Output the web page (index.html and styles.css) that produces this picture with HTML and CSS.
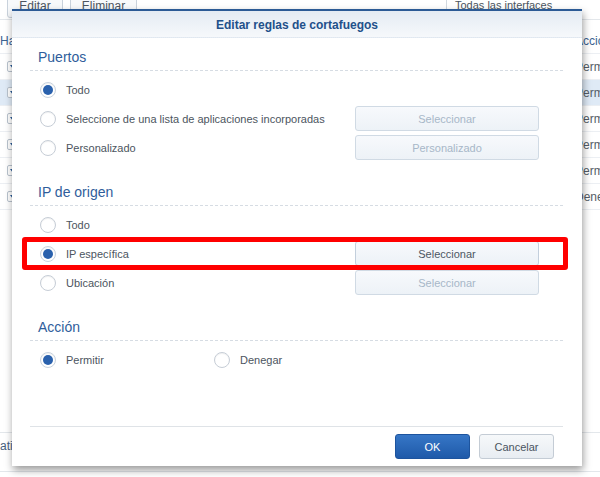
FILE: index.html
```html
<!DOCTYPE html>
<html lang="es">
<head>
  <meta charset="utf-8" />
  <title>Editar reglas de cortafuegos</title>
  <link rel="stylesheet" href="styles.css">
</head>
<body>

  <div class="page">
    <div class="toolbar">
      <span class="tb-btn tb-edit">Editar</span>
      <span class="tb-btn tb-del">Eliminar</span>
      <span class="tb-select">Todas las interfaces</span>
    </div>

    <div class="grid">
      <div class="g-row g-head"><span class="g-a">Habilitado</span><span class="g-z">Acción</span></div>
      <div class="g-row"><span class="g-a"><i class="pick"></i></span><span class="g-z">Permitir</span></div>
      <div class="g-row sel"><span class="g-a"><i class="pick"></i></span><span class="g-z">Permitir</span></div>
      <div class="g-row"><span class="g-a"><i class="pick"></i></span><span class="g-z">Permitir</span></div>
      <div class="g-row"><span class="g-a"><i class="pick"></i></span><span class="g-z">Permitir</span></div>
      <div class="g-row"><span class="g-a"><i class="pick"></i></span><span class="g-z">Permitir</span></div>
      <div class="g-row"><span class="g-a"><i class="pick"></i></span><span class="g-z">Denegar</span></div>
    </div>

    <div class="statusbar">atis</div>
  </div>

  <div class="modal">
    <div class="modal-head">Editar reglas de cortafuegos</div>

    <div class="modal-body">
      <div class="section">
        <div class="section-title">Puertos</div>
        <div class="options">
          <div class="opt-row">
            <label class="opt"><span class="radio on"></span>Todo</label>
          </div>
          <div class="opt-row">
            <label class="opt"><span class="radio"></span>Seleccione de una lista de aplicaciones incorporadas</label>
            <button class="btn-field off">Seleccionar</button>
          </div>
          <div class="opt-row">
            <label class="opt"><span class="radio"></span>Personalizado</label>
            <button class="btn-field off">Personalizado</button>
          </div>
        </div>
      </div>

      <div class="section">
        <div class="section-title">IP de origen</div>
        <div class="options">
          <div class="opt-row">
            <label class="opt"><span class="radio"></span>Todo</label>
          </div>
          <div class="opt-row">
            <label class="opt"><span class="radio on"></span>IP específica</label>
            <button class="btn-field">Seleccionar</button>
          </div>
          <div class="opt-row">
            <label class="opt"><span class="radio"></span>Ubicación</label>
            <button class="btn-field off">Seleccionar</button>
          </div>
        </div>
      </div>

      <div class="section">
        <div class="section-title">Acción</div>
        <div class="options">
          <div class="opt-row">
            <label class="opt opt-wide"><span class="radio on"></span>Permitir</label>
            <label class="opt"><span class="radio"></span>Denegar</label>
          </div>
        </div>
      </div>
    </div>

    <div class="modal-foot">
      <button class="btn btn-ok">OK</button>
      <button class="btn">Cancelar</button>
    </div>
  </div>

  <div class="mark"></div>

</body>
</html>
```

FILE: styles.css
```css
body {
  margin: 0;
  font-family: "Liberation Sans", Arial, sans-serif;
  font-size: 11px;
  color: #4c5560;
  background: #fff;
}

/* page behind the dialog */
.page {
  width: 600px;
  height: 477px;
  overflow: hidden;
  display: flex;
  flex-direction: column;
}

.toolbar {
  height: 20px;
  flex: none;
  display: flex;
  align-items: flex-start;
  border-bottom: 1px solid #e3e7eb;
  box-sizing: border-box;
}

.tb-btn {
  margin-top: -6px;
  height: 24px;
  line-height: 22px;
  border: 1px solid #c9d2dc;
  border-radius: 3px;
  box-sizing: border-box;
  text-align: center;
  font-size: 12px;
  color: #4c5560;
  background: #f7f9fb;
}

.tb-edit {
  width: 56px;
  margin-left: 7px;
}

.tb-del {
  width: 67px;
  margin-left: 7px;
}

.tb-select {
  margin-left: auto;
  width: 145px;
  height: 17px;
  padding-left: 8px;
  line-height: 10px;
  border-left: 1px solid #d2d9e0;
  color: #4c5560;
}

.grid {
  flex: 1;
}

.g-row {
  display: flex;
  align-items: center;
  height: 26px;
  border-bottom: 1px solid #eceff3;
  box-sizing: border-box;
  font-size: 12px;
  color: #555d66;
  white-space: nowrap;
}

.g-head {
  margin-top: 8px;
  color: #3c6391;
}

.g-row.sel {
  background: #dfeaf6;
}

.g-a {
  width: 40px;
  padding-left: 7px;
  box-sizing: border-box;
}

.g-head .g-a {
  padding-left: 0;
}

.g-z {
  margin-left: auto;
  width: 25px;
}

.pick {
  display: block;
  width: 14px;
  height: 11px;
  border: 1px solid #b9c3ce;
  border-radius: 2px;
  box-sizing: border-box;
  position: relative;
  background: #fff;
}

.pick::after {
  content: "";
  position: absolute;
  left: 2px;
  top: 3px;
  border-left: 3px solid transparent;
  border-right: 3px solid transparent;
  border-top: 4px solid #2a5a96;
}

.statusbar {
  height: 40px;
  margin-bottom: 5px;
  line-height: 26px;
  border-top: 1px solid #e3e7eb;
  border-bottom: 1px solid #e3e7eb;
  box-sizing: border-box;
  font-size: 12px;
  color: #47607d;
}

/* dialog */
.modal {
  position: absolute;
  left: 12px;
  top: 9px;
  width: 570px;
  height: 457px;
  background: #fff;
  border-top: 2px solid #2b5a95;
  box-sizing: border-box;
  box-shadow: 1px 4px 8px rgba(0, 0, 0, 0.4);
  display: flex;
  flex-direction: column;
}

.modal-head {
  height: 27px;
  padding-top: 2px;
  line-height: 25px;
  box-sizing: border-box;
  text-align: center;
  font-size: 12px;
  font-weight: bold;
  color: #22508a;
  background: linear-gradient(#e4ebf3, #f6f8fb);
  border-bottom: 1px dotted #e0e7ef;
}

.modal-body {
  flex: 1;
  padding: 0 19px 0 18px;
}

.section {
  margin-top: 21px;
}

.section:first-child {
  margin-top: 10px;
}

.section-title {
  font-size: 14px;
  line-height: 18px;
  color: #2f5d9b;
  padding: 0 0 4px 8px;
  border-bottom: 1px dashed #d6dce3;
}

.options {
  padding-top: 4px;
}

.opt-row {
  display: flex;
  align-items: center;
  height: 29px;
  padding-left: 10px;
}

.opt {
  display: flex;
  align-items: center;
  gap: 10px;
  flex: 1;
  color: #4c5560;
}

.opt-wide {
  flex: none;
  width: 174px;
}

.radio {
  flex: none;
  position: relative;
  width: 16px;
  height: 16px;
  border: 1px solid #c6cdd6;
  border-radius: 50%;
  box-sizing: border-box;
  background: #fff;
  box-shadow: inset 0 1px 1px rgba(0, 0, 0, 0.06);
}

.radio.on {
  border-color: #c9d3de;
}

.radio.on::after {
  content: "";
  position: absolute;
  left: 2px;
  top: 2px;
  width: 10px;
  height: 10px;
  border-radius: 50%;
  background: #2a61ad;
}

.btn-field {
  flex: none;
  width: 184px;
  height: 25px;
  margin-right: 24px;
  padding: 0;
  border: 1px solid #c3cfdc;
  border-radius: 3px;
  background: linear-gradient(#f7f9fc, #edf2f7);
  font-family: inherit;
  font-size: 11px;
  color: #4d5763;
}

.btn-field.off {
  color: #a7b7c8;
  border-color: #d0dae4;
}

.modal-foot {
  margin: 0 19px 0 18px;
  border-top: 1px solid #dfe3e7;
  padding: 7px 9px 7px 0;
  display: flex;
  justify-content: flex-end;
  gap: 9px;
}

.btn {
  width: 75px;
  height: 25px;
  padding: 0;
  border: 1px solid #c4ccd5;
  border-radius: 3px;
  background: linear-gradient(#f6f8fa, #e8edf2);
  font-family: inherit;
  font-size: 11px;
  color: #4a5460;
}

.btn-ok {
  border-color: #1d549e;
  background: linear-gradient(#3676c6, #1f5aa9);
  color: #fff;
}

/* red annotation frame */
.mark {
  position: absolute;
  left: 22px;
  top: 237px;
  width: 546px;
  height: 33px;
  border: 5px solid #f00;
  border-radius: 3px;
  box-sizing: border-box;
}
```
